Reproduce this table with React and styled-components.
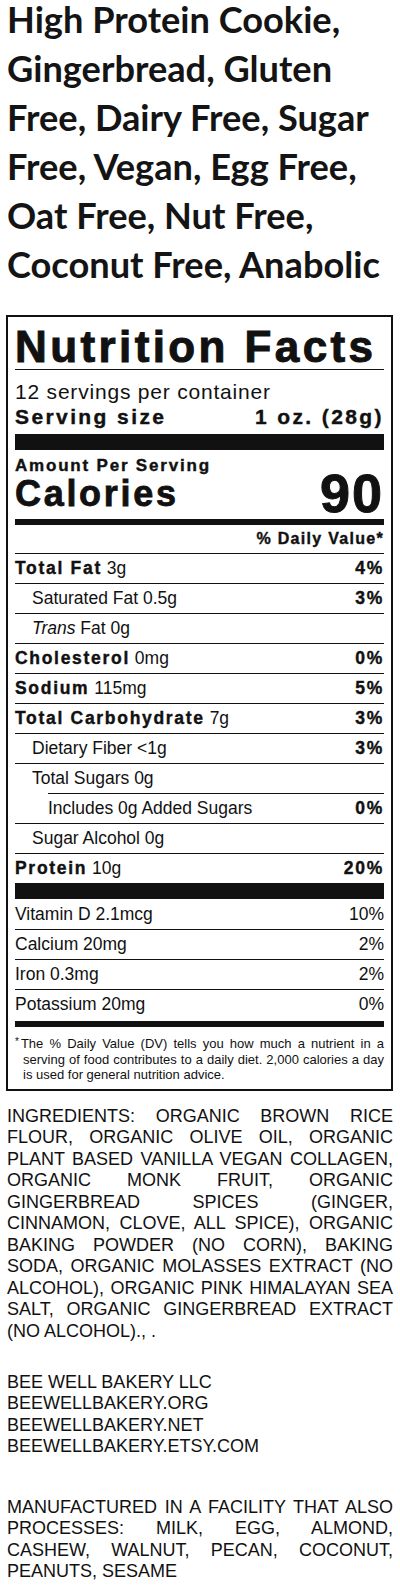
import React from 'react'
import styled, { createGlobalStyle, css } from 'styled-components'

const GlobalStyle = createGlobalStyle`
  html, body {
    margin: 0;
    padding: 0;
    background: #fff;
  }
  body {
    font-family: "Liberation Sans", Arial, sans-serif;
    color: #111;
  }
`

const heavy = css`
  font-weight: 700;
  letter-spacing: 1.7px;
  -webkit-text-stroke: 0.4px #111;
`

const Page = styled.div`
  width: 400px;
`

const ProductTitle = styled.h1`
  margin: -5px 0 0;
  padding: 0 7px;
  font-family: Lato, "Open Sans", sans-serif;
  font-weight: 700;
  font-size: 36.2px;
  line-height: 49px;
  color: #141414;
`

const Label = styled.section`
  margin: 26px 7px 0 6px;
  border: 2px solid #111;
  padding: 0 7px;
`

const LabelTitle = styled.h2`
  margin: 0;
  padding-top: 8px;
  font-size: 44px;
  line-height: 44px;
  white-space: nowrap;
  font-weight: 700;
  letter-spacing: 3.4px;
  -webkit-text-stroke: 1px #111;
`

const Rule = styled.div`
  height: ${({ $h }) => $h}px;
  margin-top: ${({ $mt }) => $mt || 0}px;
  background: #111;
`

const Servings = styled.div`
  margin-top: 10px;
  font-size: 21px;
  line-height: 24px;
  letter-spacing: 0.8px;
`

const ServingRow = styled.div`
  display: flex;
  justify-content: space-between;
  margin-top: 1px;
  font-size: 21px;
  line-height: 24px;
  ${heavy};
  letter-spacing: 2.4px;
`

const CalorieBlock = styled.div`
  display: flex;
  justify-content: space-between;
  align-items: flex-end;
  margin-top: 6px;
`

const AmountPer = styled.div`
  font-size: 17px;
  line-height: 20px;
  ${heavy};
  letter-spacing: 1.8px;
`

const Calories = styled.div`
  font-size: 36px;
  line-height: 36px;
  ${heavy};
  letter-spacing: 2.7px;
  -webkit-text-stroke: 0.8px #111;
`

const CalorieCount = styled.div`
  margin-bottom: -3px;
  font-size: 54px;
  line-height: 44px;
  ${heavy};
  letter-spacing: 2px;
  -webkit-text-stroke: 1px #111;
`

const DailyHeader = styled.div`
  text-align: right;
  font-size: 16px;
  line-height: 28px;
  ${heavy};
  letter-spacing: 1.3px;
`

const Row = styled.div`
  display: flex;
  justify-content: space-between;
  border-top: ${({ $first }) => ($first ? 'none' : '1px solid #111')};
  margin-left: ${({ $inset }) => $inset || 0}px;
  padding-left: ${({ $indent }) => $indent || 0}px;
  height: ${({ $first }) => ($first ? 30 : 29)}px;
  line-height: ${({ $first }) => ($first ? 30 : 29)}px;
  font-size: 17.5px;
  white-space: nowrap;
`

const Bold = styled.span`
  ${heavy};
  font-size: 17.5px;
`

const Pct = styled.span`
  ${({ $bold }) => $bold && heavy};
`

const Footnote = styled.p`
  margin: 7px 0 0;
  padding: 0 0 6px 8px;
  text-indent: -8px;
  text-align: justify;
  font-size: 13px;
  line-height: 15.5px;
`

const Star = styled.span`
  font-size: 10px;
  vertical-align: 3px;
  margin-right: 2px;
`

const Para = styled.p`
  margin: ${({ $mt }) => $mt}px 0 0;
  padding: 0 7px;
  font-size: 18px;
  line-height: 21.5px;
  text-align: ${({ $justify }) => ($justify ? 'justify' : 'left')};
`

const Line = styled.div``

const nutrients = [
  { name: 'Total Fat', amount: '3g', pct: '4%', bold: true },
  { name: 'Saturated Fat 0.5g', pct: '3%', indent: 17 },
  { name: 'Trans', italic: true, amount: 'Fat 0g', indent: 17 },
  { name: 'Cholesterol', amount: '0mg', pct: '0%', bold: true },
  { name: 'Sodium', amount: '115mg', pct: '5%', bold: true },
  { name: 'Total Carbohydrate', amount: '7g', pct: '3%', bold: true },
  { name: 'Dietary Fiber <1g', pct: '3%', indent: 17 },
  { name: 'Total Sugars 0g', indent: 17 },
  { name: 'Includes 0g Added Sugars', pct: '0%', inset: 33 },
  { name: 'Sugar Alcohol 0g', indent: 17 },
  { name: 'Protein', amount: '10g', pct: '20%', bold: true },
]

const vitamins = [
  ['Vitamin D 2.1mcg', '10%'],
  ['Calcium 20mg', '2%'],
  ['Iron 0.3mg', '2%'],
  ['Potassium 20mg', '0%'],
]

const NutrientLabel = ({ n }) => {
  if (n.bold) return <span><Bold>{n.name}</Bold> {n.amount}</span>
  if (n.italic) return <span><i>{n.name}</i> {n.amount}</span>
  return <span>{n.name}</span>
}

const App = () => {
  return (
    <Page>
      <GlobalStyle />
      <ProductTitle>
        High Protein Cookie, Gingerbread, Gluten Free, Dairy Free, Sugar Free, Vegan, Egg Free, Oat Free, Nut Free, Coconut Free, Anabolic
      </ProductTitle>

      <Label>
        <LabelTitle>Nutrition Facts</LabelTitle>
        <Rule $h={1} />
        <Servings>12 servings per container</Servings>
        <ServingRow>
          <span>Serving size</span>
          <span>1 oz. (28g)</span>
        </ServingRow>
        <Rule $h={16} $mt={5} />
        <CalorieBlock>
          <div>
            <AmountPer>Amount Per Serving</AmountPer>
            <Calories>Calories</Calories>
          </div>
          <CalorieCount>90</CalorieCount>
        </CalorieBlock>
        <Rule $h={6} $mt={7} />
        <DailyHeader>% Daily Value*</DailyHeader>

        {nutrients.map((n) => (
          <Row key={n.name} $indent={n.indent} $inset={n.inset}>
            <NutrientLabel n={n} />
            {n.pct && <Pct $bold>{n.pct}</Pct>}
          </Row>
        ))}
        <Rule $h={16} />

        {vitamins.map(([name, pct], i) => (
          <Row key={name} $first={i === 0}>
            <span>{name}</span>
            <Pct>{pct}</Pct>
          </Row>
        ))}
        <Rule $h={6} $mt={2} />

        <Footnote>
          <Star>*</Star>The % Daily Value (DV) tells you how much a nutrient in a serving of food contributes to a daily diet. 2,000 calories a day is used for general nutrition advice.
        </Footnote>
      </Label>

      <Para $mt={15} $justify>
        INGREDIENTS: ORGANIC BROWN RICE FLOUR, ORGANIC OLIVE OIL, ORGANIC PLANT BASED VANILLA VEGAN COLLAGEN, ORGANIC MONK FRUIT, ORGANIC GINGERBREAD SPICES (GINGER, CINNAMON, CLOVE, ALL SPICE), ORGANIC BAKING POWDER (NO CORN), BAKING SODA, ORGANIC MOLASSES EXTRACT (NO ALCOHOL), ORGANIC PINK HIMALAYAN SEA SALT, ORGANIC GINGERBREAD EXTRACT (NO ALCOHOL)., .
      </Para>

      <Para $mt={29.5}>
        <Line>BEE WELL BAKERY LLC</Line>
        <Line>BEEWELLBAKERY.ORG</Line>
        <Line>BEEWELLBAKERY.NET</Line>
        <Line>BEEWELLBAKERY.ETSY.COM</Line>
      </Para>

      <Para $mt={39} $justify>
        MANUFACTURED IN A FACILITY THAT ALSO PROCESSES: MILK, EGG, ALMOND, CASHEW, WALNUT, PECAN, COCONUT, PEANUTS, SESAME
      </Para>
    </Page>
  )
}

export default App
